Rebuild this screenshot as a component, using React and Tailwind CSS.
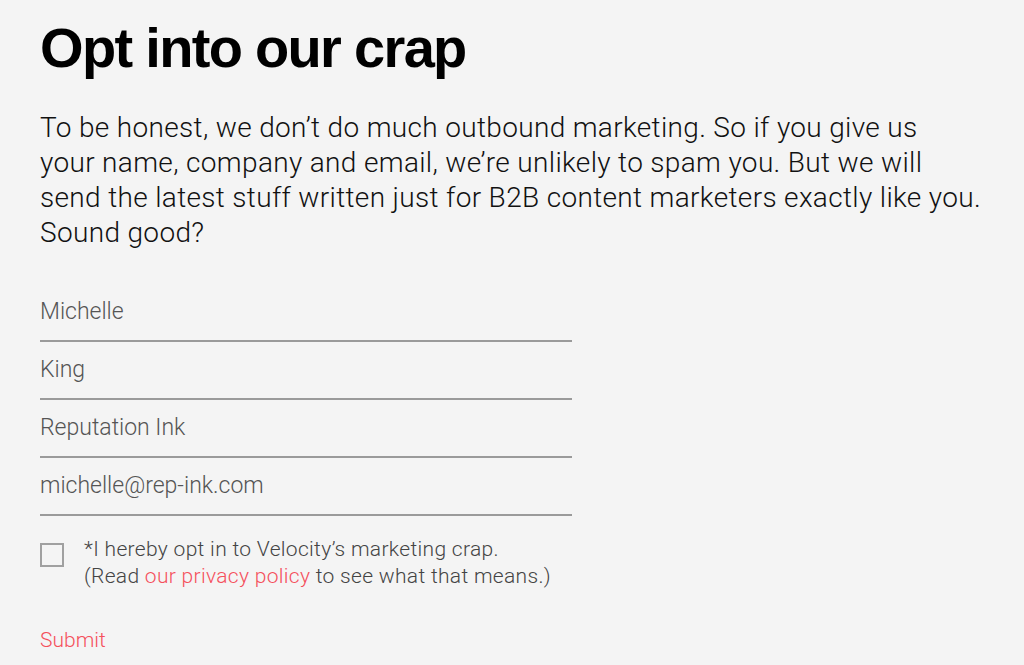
export default function App() {
  const fields = ["Michelle", "King", "Reputation Ink", "michelle@rep-ink.com"];
  return (
    <div className="min-h-[665px] w-full bg-[#f4f4f4] pl-[40px] pt-[16px] font-['Roboto',sans-serif] overflow-hidden">
      <h1 className="font-['Liberation_Sans',Arial,sans-serif] text-[56px] font-bold leading-[64px] tracking-[-0.03em] text-black">
        Opt into our crap
      </h1>
      <p className="mt-[30px] w-[984px] whitespace-nowrap text-[28px] font-light leading-[35px] tracking-[0.012em] text-[#111]">
        To be honest, we don’t do much outbound marketing. So if you give us
        <br />
        your name, company and email, we’re unlikely to spam you. But we will
        <br />
        send the latest stuff written just for B2B content marketers exactly like you.
        <br />
        Sound good?
      </p>
      <div className="mt-[34px] w-[532px]">
        {fields.map((f) => (
          <div key={f} className="flex h-[58px] items-center border-b-2 border-[#9a9a9a] text-[23px] font-light leading-[30px] text-[#555]">
            {f}
          </div>
        ))}
      </div>
      <div className="mt-[20px] flex items-start gap-[20px]">
        <div className="mt-[7px] h-[24px] w-[24px] shrink-0 border-2 border-[#a0a0a0]" />
        <div className="text-[21px] font-light leading-[27px] tracking-[0.015em] text-[#444]">
          <div>*I hereby opt in to Velocity’s marketing crap.</div>
          <div>
            (Read <span className="text-[#f5505c]">our privacy policy</span> to see what that means.)
          </div>
        </div>
      </div>
      <div className="mt-[36px] text-[21px] font-light leading-[28px] text-[#f5505c]">Submit</div>
    </div>
  );
}
